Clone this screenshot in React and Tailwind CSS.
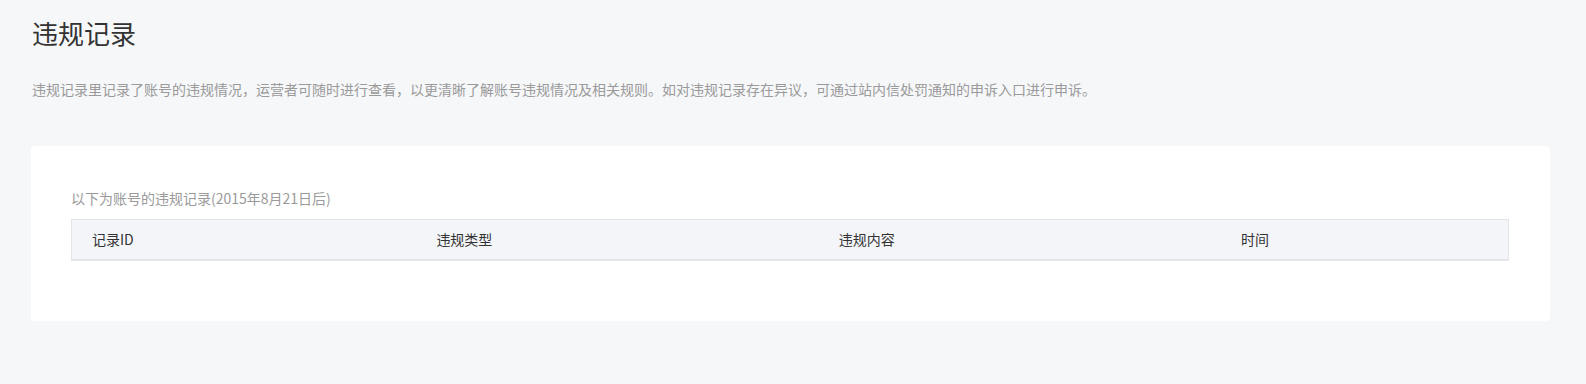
import React from "react";

const cols = [
  { label: "记录ID", w: "w-[24%]" },
  { label: "违规类型", w: "w-[28%]" },
  { label: "违规内容", w: "w-[28%]" },
  { label: "时间", w: "w-[20%]" },
];

export default function App() {
  return (
    <div
      className="min-h-[384px] bg-[#f6f7f9] pl-[31px] pr-9 pt-[13px]"
      style={{ fontFamily: '"Noto Sans CJK SC", "Noto Sans", sans-serif' }}
    >
      <h1 className="ml-px text-[26px] leading-[40px] font-normal text-[#333]">违规记录</h1>
      <p className="ml-px mt-[26px] text-[14px] leading-[20px] text-[#9a9a9a]">
        违规记录里记录了账号的违规情况，运营者可随时进行查看，以更清晰了解账号违规情况及相关规则。如对违规记录存在异议，可通过站内信处罚通知的申诉入口进行申诉。
      </p>

      <div className="mt-[47px] rounded bg-white pl-10 pr-[41px] pt-[42px] pb-[60px]">
        <div className="text-[14px] leading-[20px] text-[#9a9a9a]">以下为账号的违规记录(2015年8月21日后)</div>
        <table className="mt-[11px] w-full table-fixed border-collapse">
          <thead>
            <tr className="border border-b-2 border-[#e4e5ea] bg-[#f4f5f9]">
              {cols.map(c => (
                <th
                  key={c.label}
                  className={c.w + " h-[40px] pl-5 text-left text-[14px] font-normal text-[#333]"}
                >
                  {c.label}
                </th>
              ))}
            </tr>
          </thead>
          <tbody />
        </table>
      </div>
    </div>
  );
}
